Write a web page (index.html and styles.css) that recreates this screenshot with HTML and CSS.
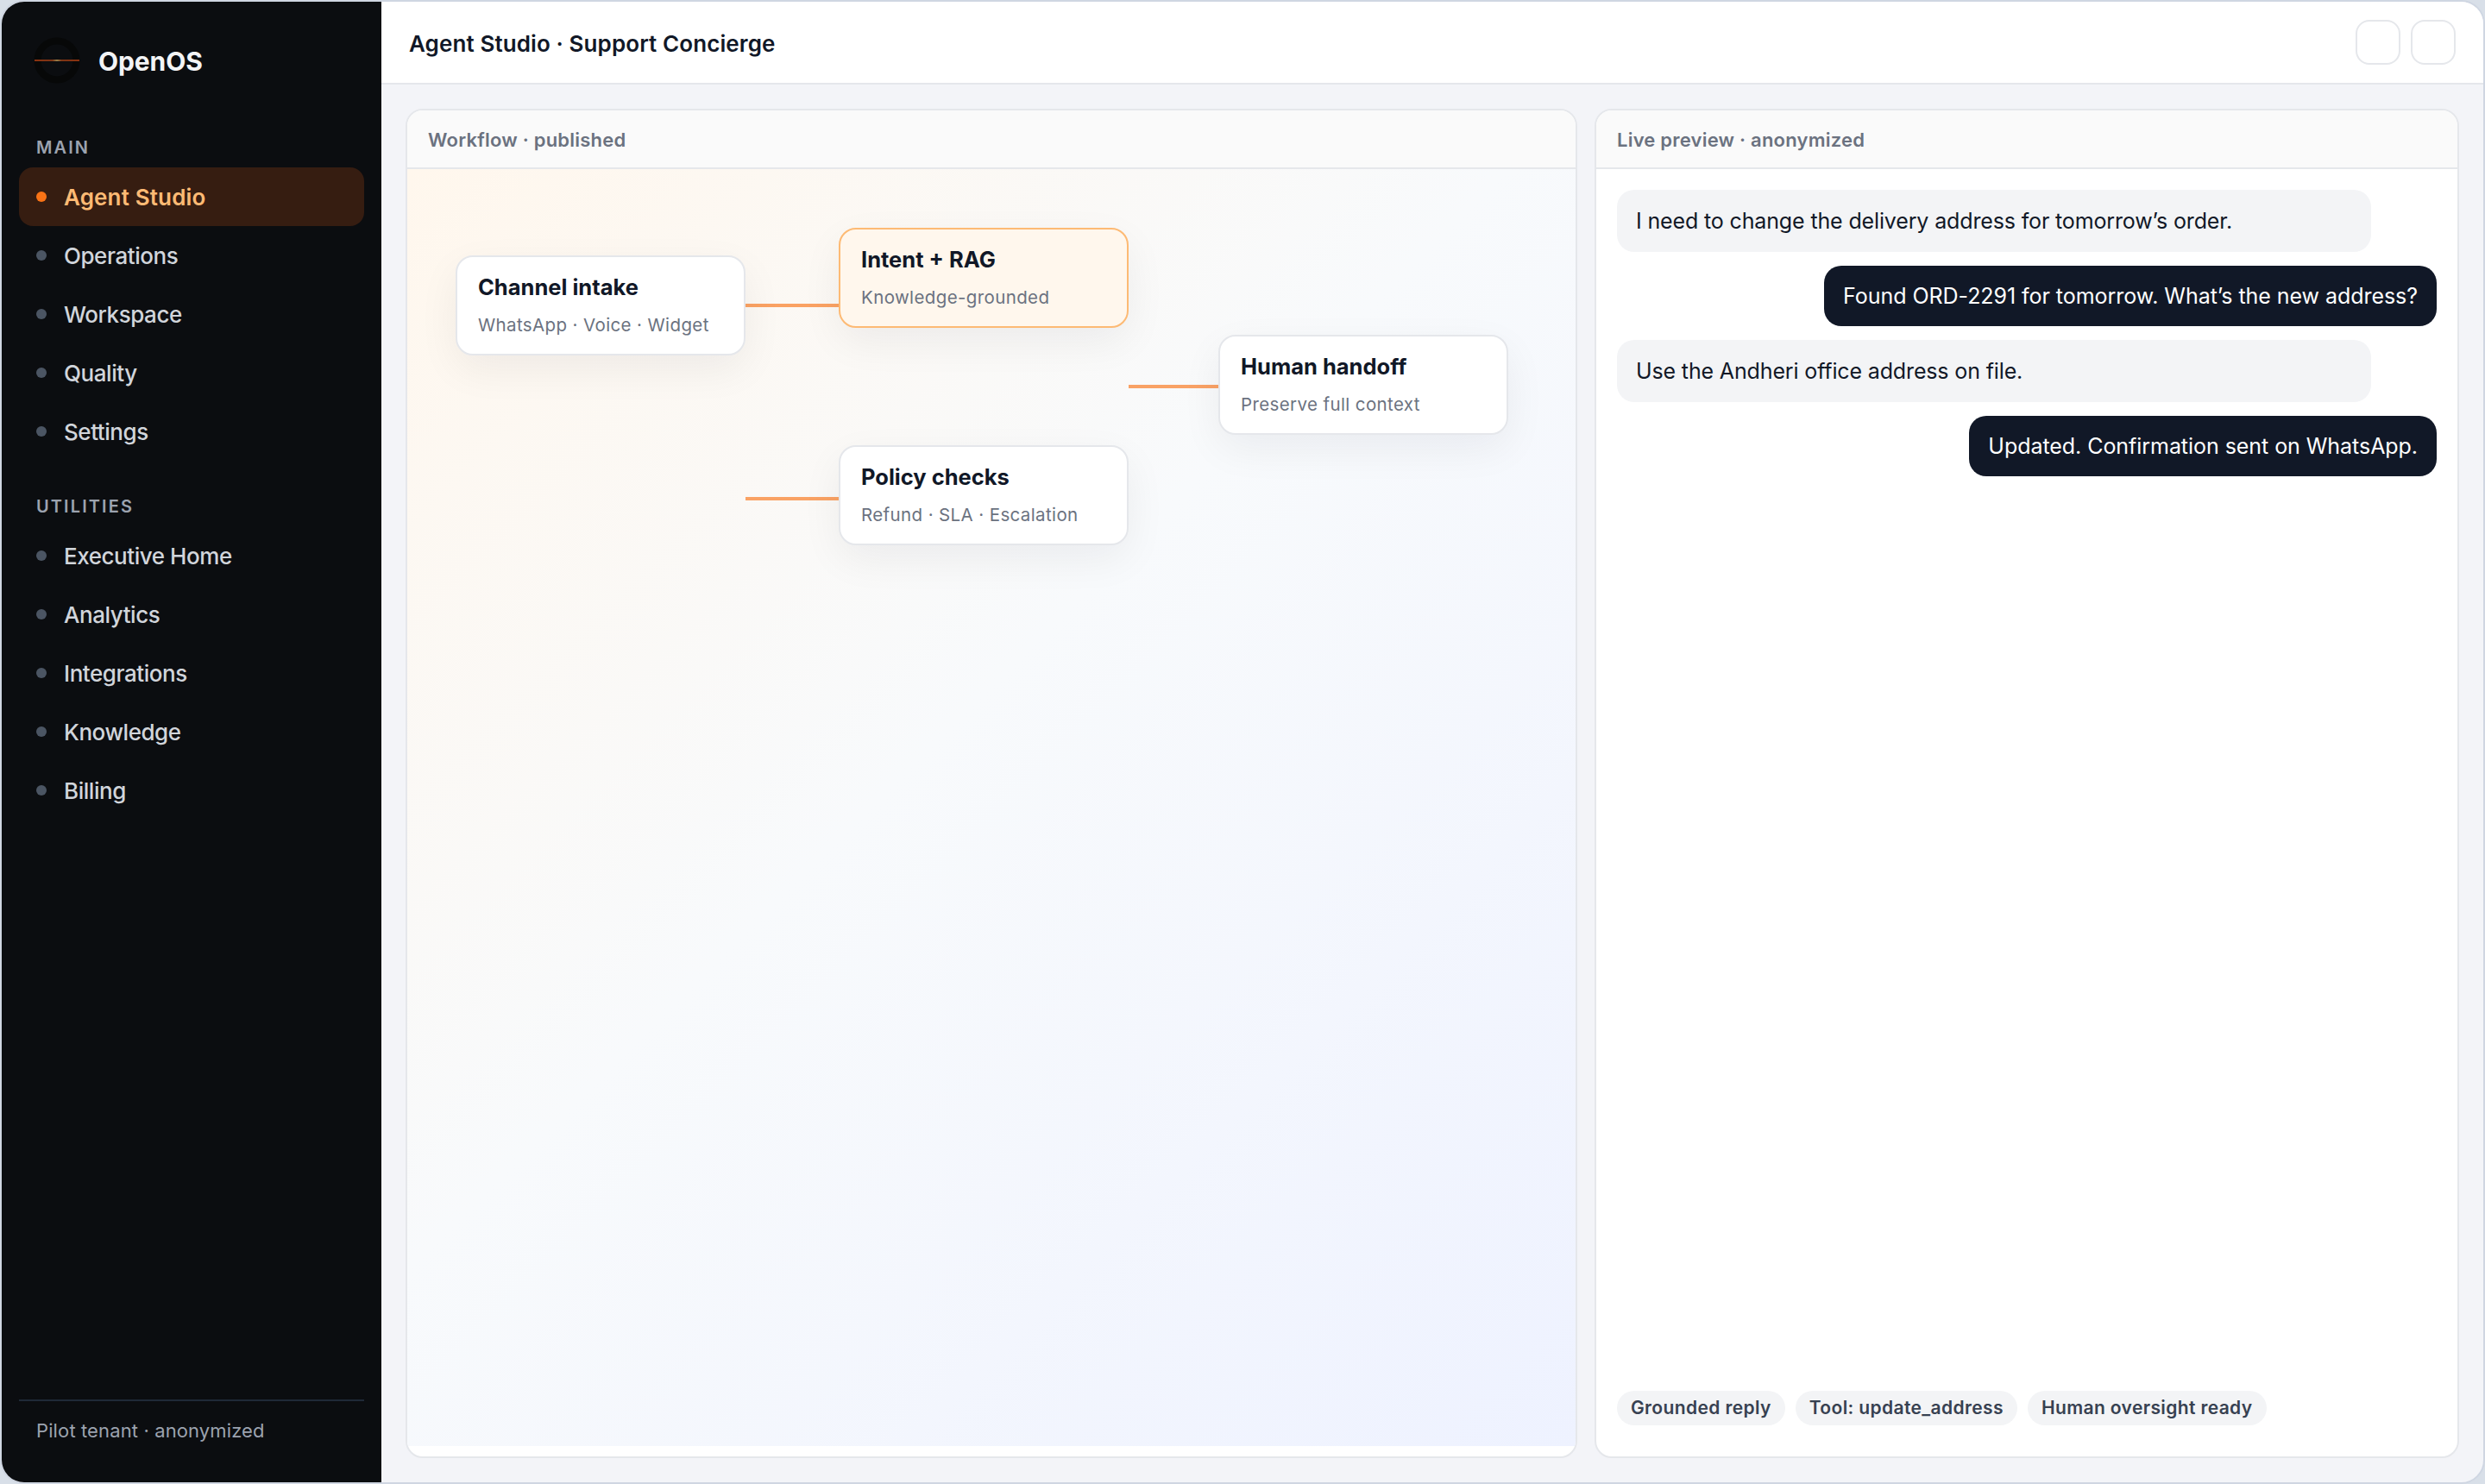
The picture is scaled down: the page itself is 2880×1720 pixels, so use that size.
FILE: index.html
```html
<!DOCTYPE html>
<html lang="en">
<head>
  <meta charset="UTF-8" />
  <title>OpenOS · Agent Studio</title>
  <link rel="stylesheet" href="styles.css">
</head>
<body>
  <div class="window">
    <aside class="sidebar">
      <div class="brand">
        <svg class="logo" viewBox="0 0 56 56">
          <defs>
            <linearGradient id="beam" x1="0" x2="1" y1="0" y2="0">
              <stop offset="0" stop-color="#8a3210" />
              <stop offset="0.4" stop-color="#7c3415" />
              <stop offset="0.5" stop-color="#96814a" />
              <stop offset="0.6" stop-color="#7c3415" />
              <stop offset="1" stop-color="#8a3210" />
            </linearGradient>
          </defs>
          <circle cx="28" cy="28" r="22.5" fill="none" stroke="#070808" stroke-width="8" />
          <rect x="2" y="27" width="52" height="2" fill="url(#beam)" />
        </svg>
        <span>OpenOS</span>
      </div>

      <div class="nav-label">Main</div>
      <a class="nav-item active">Agent Studio</a>
      <a class="nav-item">Operations</a>
      <a class="nav-item">Workspace</a>
      <a class="nav-item">Quality</a>
      <a class="nav-item">Settings</a>

      <div class="nav-label second">Utilities</div>
      <a class="nav-item">Executive Home</a>
      <a class="nav-item">Analytics</a>
      <a class="nav-item">Integrations</a>
      <a class="nav-item">Knowledge</a>
      <a class="nav-item">Billing</a>

      <div class="side-foot">Pilot tenant · anonymized</div>
    </aside>

    <main class="main">
      <header class="topbar">
        <h1>Agent Studio · Support Concierge</h1>
        <div class="actions">
          <span class="icon-btn"></span>
          <span class="icon-btn"></span>
        </div>
      </header>

      <div class="content">
        <section class="card">
          <div class="card-head">Workflow · published</div>
          <div class="canvas">
            <div class="line line-1"></div>
            <div class="line line-2"></div>
            <div class="line line-3"></div>
            <div class="node node-intake"><strong>Channel intake</strong><span>WhatsApp · Voice · Widget</span></div>
            <div class="node node-intent"><strong>Intent + RAG</strong><span>Knowledge-grounded</span></div>
            <div class="node node-policy"><strong>Policy checks</strong><span>Refund · SLA · Escalation</span></div>
            <div class="node node-human"><strong>Human handoff</strong><span>Preserve full context</span></div>
          </div>
        </section>

        <section class="card">
          <div class="card-head">Live preview · anonymized</div>
          <div class="chat">
            <div class="msg user">I need to change the delivery address for tomorrow’s order.</div>
            <div class="msg bot">Found ORD-2291 for tomorrow. What’s the new address?</div>
            <div class="msg user">Use the Andheri office address on file.</div>
            <div class="msg bot">Updated. Confirmation sent on WhatsApp.</div>
            <div class="chips">
              <span>Grounded reply</span>
              <span>Tool: update_address</span>
              <span>Human oversight ready</span>
            </div>
          </div>
        </section>
      </div>
    </main>
  </div>
</body>
</html>
```

FILE: styles.css
```css
* { box-sizing: border-box; }
body { margin: 0; height: 1720px; background: #d8dfe8; font-family: Inter, "Liberation Sans", sans-serif; color: #111827; }
.window { display: flex; height: 1720px; border: 2px solid #cfd6e2; border-radius: 28px; overflow: hidden; background: #f3f4f8; }

/* sidebar */
.sidebar { width: 440px; flex: none; display: flex; flex-direction: column; padding: 36px 20px 28px; background: #0b0d10; }
.brand { display: flex; align-items: center; gap: 20px; height: 64px; padding-left: 16px; margin-bottom: 54px; font-size: 30px; font-weight: 700; letter-spacing: -0.1px; color: #f3f4f6; }
.brand span { padding-top: 2px; }
.logo { width: 56px; height: 56px; }
.nav-label { height: 38px; padding-left: 20px; font-size: 20px; line-height: 30px; font-weight: 600; letter-spacing: 2.1px; text-transform: uppercase; color: #9ca3af; }
.nav-label.second { margin-top: 38px; }
.nav-item { display: flex; align-items: center; gap: 20px; height: 68px; padding: 0 20px; border-radius: 16px; font-size: 26px; font-weight: 500; letter-spacing: -0.45px; color: #d1d5db; }
.nav-item::before { content: ""; width: 12px; height: 12px; border-radius: 50%; background: #4b5563; }
.nav-item.active { background: #361d11; color: #fdba74; font-weight: 600; letter-spacing: 0.15px; }
.nav-item.active::before { background: #f97316; }
.side-foot { margin-top: auto; height: 68px; padding: 19px 20px 0; border-top: 2px solid #1f2937; font-size: 22px; line-height: 30px; letter-spacing: 0.12px; color: #9ca3af; }

/* main */
.main { flex: 1; display: flex; flex-direction: column; min-width: 0; }
.topbar { display: flex; align-items: center; justify-content: space-between; height: 96px; padding: 0 32px; background: #fff; border-bottom: 2px solid #e5e7eb; }
.topbar h1 { margin: 0; padding-top: 2px; font-size: 26px; font-weight: 600; letter-spacing: 0.1px; }
.actions { display: flex; gap: 12px; }
.icon-btn { width: 52px; height: 52px; border: 2px solid #e5e7eb; border-radius: 16px; background: #fff; }
.content { flex: 1; display: grid; grid-template-columns: 1358px 1fr; gap: 20px; padding: 28px; }
.card { display: flex; flex-direction: column; border: 2px solid #e5e7eb; border-radius: 20px; overflow: hidden; background: #fff; }
.card-head { height: 68px; padding: 1px 24px 0; border-bottom: 2px solid #e5e7eb; background: #fafafa; font-size: 22px; line-height: 66px; font-weight: 600; letter-spacing: 0.22px; color: #6b7280; }

/* workflow canvas */
.canvas { position: relative; height: 1480px; background: linear-gradient(135deg, #fff7ed 0%, #f8fafc 45%, #eef2ff 100%); }
.node { position: absolute; width: 336px; height: 116px; padding: 18px 24px; border: 2px solid #e5e7eb; border-radius: 20px; background: #fff; box-shadow: 0 16px 48px rgba(15, 23, 42, 0.06); }
.node strong { display: block; font-size: 25.5px; line-height: 34px; font-weight: 700; }
.node span { display: block; margin-top: 12px; font-size: 20.5px; line-height: 30px; letter-spacing: 0.38px; color: #6b7280; }
.node-intake { left: 56px; top: 100px; }
.node-intent { left: 500px; top: 68px; background: #fff7ed; border-color: #fdba74; }
.node-policy { left: 500px; top: 320px; }
.node-human { left: 940px; top: 192px; }
.line { position: absolute; height: 4px; background: #f97316; opacity: 0.65; }
.line-1 { left: 392px; top: 156px; width: 108px; }
.line-2 { left: 392px; top: 380px; width: 108px; }
.line-3 { left: 836px; top: 250px; width: 104px; }

/* chat preview */
.chat { flex: 1; display: flex; flex-direction: column; gap: 16px; padding: 24px 24px 36px; }
.msg { padding: 18px 22px; border-radius: 20px; font-size: 25px; line-height: 36px; }
.msg.user { width: 92%; letter-spacing: -0.14px; background: #f3f4f6; }
.msg.bot { align-self: flex-end; line-height: 34px; letter-spacing: -0.05px; background: #111827; color: #fff; }
.chips { display: flex; gap: 12px; margin-top: auto; }
.chips span { height: 40px; padding: 0 16px; border-radius: 20px; background: #f3f4f6; font-size: 21px; line-height: 40px; font-weight: 600; letter-spacing: 0.38px; color: #374151; }
```
